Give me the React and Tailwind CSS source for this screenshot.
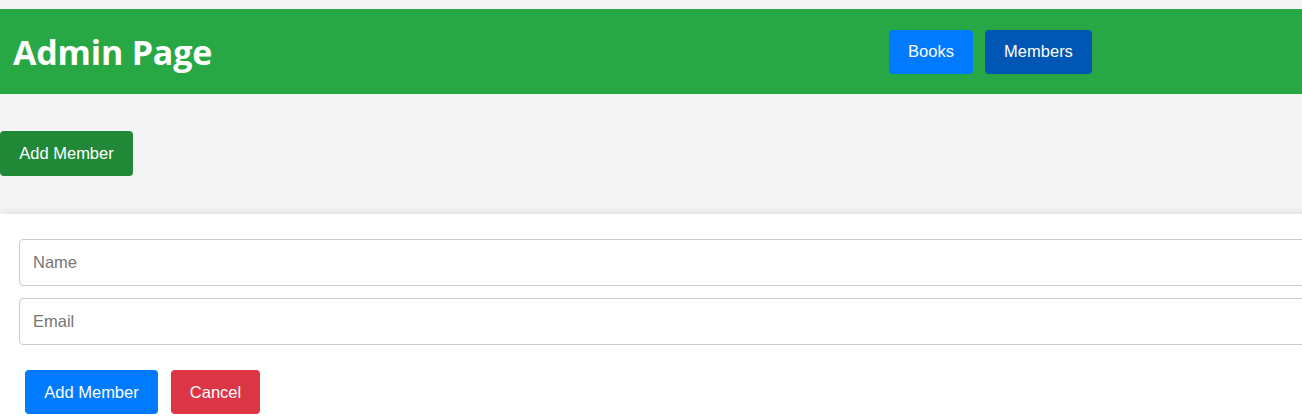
import React from "react";

export default function App() {
  const [name, setName] = React.useState("");
  const [email, setEmail] = React.useState("");

  return (
    <div className="min-h-[420px] bg-[#f4f4f4] pt-[9px] font-['Liberation_Sans',Arial,sans-serif] overflow-hidden">
      <header className="flex h-[85px] items-center bg-[#28a745] pl-[13px]">
        <h1 className="font-['Open_Sans',sans-serif] text-[34px] font-bold leading-none text-white tracking-[-0.2px]">
          Admin Page
        </h1>
        <nav className="ml-auto mr-[210px] flex gap-[12px]">
          <button className="h-[44px] w-[84px] rounded-[4px] bg-[#007bff] text-[16.5px] text-white">
            Books
          </button>
          <button className="h-[44px] w-[107px] rounded-[4px] bg-[#0056b3] text-[16.5px] text-white">
            Members
          </button>
        </nav>
      </header>

      <section className="pt-[37px] pb-[38px]">
        <button className="h-[45px] w-[133px] rounded-[4px] bg-[#218838] text-[16.5px] text-white">
          Add Member
        </button>
      </section>

      <div className="w-[1340px] bg-white pl-[19px] pt-[25px] pb-[20px] shadow-[0_0_10px_rgba(0,0,0,0.1)]">
        <input
          value={name}
          onChange={(e) => setName(e.target.value)}
          placeholder="Name"
          className="block h-[47px] w-full rounded-[4px] border border-[#ccc] px-[13px] text-[16.5px] placeholder:text-[#757575] outline-none"
        />
        <input
          value={email}
          onChange={(e) => setEmail(e.target.value)}
          placeholder="Email"
          className="mt-[12px] block h-[47px] w-full rounded-[4px] border border-[#ccc] px-[13px] text-[16.5px] placeholder:text-[#757575] outline-none"
        />
        <div className="mt-[25px] flex gap-[13px] pl-[6px]">
          <button className="h-[44px] w-[133px] rounded-[4px] bg-[#007bff] text-[16.5px] text-white">
            Add Member
          </button>
          <button className="h-[44px] w-[89px] rounded-[4px] bg-[#dc3545] text-[16.5px] text-white">
            Cancel
          </button>
        </div>
      </div>
    </div>
  );
}
